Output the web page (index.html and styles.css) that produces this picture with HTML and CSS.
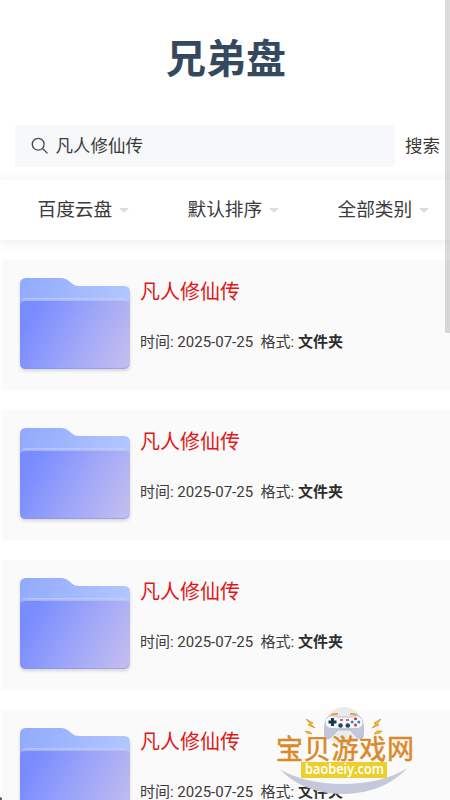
FILE: index.html
```html
<!DOCTYPE html>
<html lang="zh-CN">
<head>
<meta charset="utf-8">
<title>兄弟盘</title>
<link rel="stylesheet" href="styles.css">
</head>
<body>
<svg class="defs" width="0" height="0" aria-hidden="true">
  <defs>
    <linearGradient id="back" x1="0" y1="0" x2="1" y2="0.3"><stop offset="0" stop-color="#90a9fc"/><stop offset="1" stop-color="#b2c7ff"/></linearGradient>
    <linearGradient id="front" gradientUnits="userSpaceOnUse" x1="12" y1="34" x2="114" y2="88"><stop offset="0" stop-color="#788cff"/><stop offset=".5" stop-color="#a1a8f8"/><stop offset="1" stop-color="#c8c0ee"/></linearGradient>
    <linearGradient id="rim" x1="0" y1="0" x2="0" y2="1"><stop offset="0" stop-color="#c9d6ff" stop-opacity=".85"/><stop offset="1" stop-color="#b7c2ff" stop-opacity="0"/></linearGradient>
    <symbol id="folder" viewBox="0 0 110 96">
      <path d="M0 6Q0 0 6 0H41Q46 0 50 4L54 7Q56 8 59 8H104Q110 8 110 14V60H0Z" fill="url(#back)"/>
      <path d="M0 26Q0 20 6 20H104Q110 20 110 26V85Q110 91 104 91H6Q0 91 0 85Z" fill="url(#front)"/>
      <path d="M0 27Q0 20 6 20H104Q110 20 110 27Q109 23 104 23H6Q1 23 0 27Z" fill="url(#rim)"/>
      <path d="M1 87Q3 90.5 7 90.5H103Q107 90.5 109 87" fill="none" stroke="#8391dc" stroke-opacity=".55"/>
    </symbol>
  </defs>
</svg>
<main class="page">
  <h1 class="brand">兄弟盘</h1>
  <div class="search">
    <div class="search-box">
      <svg class="search-icon" viewBox="0 0 18 18"><circle cx="7.2" cy="7.2" r="5.9"/><path d="M11.5 11.5L16.6 16.4"/></svg>
      <span class="query">凡人修仙传</span>
    </div>
    <span class="search-button">搜索</span>
  </div>
  <nav class="filters">
    <div class="filter">百度云盘<i class="caret"></i></div>
    <div class="filter">默认排序<i class="caret"></i></div>
    <div class="filter">全部类别<i class="caret"></i></div>
  </nav>
  <section class="results">
    <article class="card"><svg class="folder"><use href="#folder"/></svg><div class="info"><h2>凡人修仙传</h2><p><span>时间: 2025-07-25</span><span>格式: <b>文件夹</b></span></p></div></article>
    <article class="card"><svg class="folder"><use href="#folder"/></svg><div class="info"><h2>凡人修仙传</h2><p><span>时间: 2025-07-25</span><span>格式: <b>文件夹</b></span></p></div></article>
    <article class="card"><svg class="folder"><use href="#folder"/></svg><div class="info"><h2>凡人修仙传</h2><p><span>时间: 2025-07-25</span><span>格式: <b>文件夹</b></span></p></div></article>
    <article class="card"><svg class="folder"><use href="#folder"/></svg><div class="info"><h2>凡人修仙传</h2><p><span>时间: 2025-07-25</span><span>格式: <b>文件夹</b></span></p></div></article>
  </section>
</main>
<svg class="watermark" viewBox="0 0 160 100">
  <circle cx="79" cy="26" r="19" fill="#e9ebef"/>
  <path d="M15 69C45 89 112 89 142 68C113 102 45 103 15 69Z" fill="#c5c7da"/>
  <path d="M66 15.500Q67 14 70 14H73M85 14H88Q91 14 92 15.500" fill="none" stroke="#e9a436" stroke-width="2"/>
  <path d="M67 15.500Q60 16 60 25Q59 32 60 37Q62 41 66 37L73 30H85L92 37Q96 41 98 37Q99 31 98 23Q97 16 91 15.500L85 17H73Z" fill="#c3c7dc" stroke="#aeb2c8" stroke-width=".8"/>
  <path d="M67 16Q60.500 17 60.500 22Q61 28 67 28H91Q97.500 28 97.500 22Q97 17 91 16L85 17.500H73Z" fill="#f7f8fc"/>
  <path d="M67.500 18V26M63.500 22H71.500" stroke="#173949" stroke-width="3"/>
  <g fill="#d92b35"><circle cx="90.500" cy="18.800" r="1.500"/><circle cx="90.500" cy="25" r="1.500"/></g>
  <g fill="#2b8bb7"><circle cx="87.200" cy="21.900" r="1.500"/><circle cx="93.800" cy="21.900" r="1.500"/></g>
  <g fill="#25475d"><circle cx="75.500" cy="25.500" r="2.300"/><circle cx="82.800" cy="25.500" r="2.300"/></g>
  <path d="M75 20H78M81 20H84" stroke="#d92b35" stroke-width="1.500"/>
  <g fill="#f3bd2d" stroke="#e49b29" stroke-width=".9"><path d="M41 19L48 23L46 24L50 28L43 25L45 24Z"/><path d="M116 19L109 23L111 24L107 28L114 25L112 24Z"/><path d="M40 31L45 32L47 34L42 33Z"/><path d="M117 31L112 31L109 34L115 33Z"/></g>
  <text class="mark-name" x="80" y="58.500" text-anchor="middle" textLength="138">宝贝游戏网</text>
  <rect x="36" y="62" width="86" height="16" fill="#ebcf2c"/>
  <text class="mark-url" x="79.500" y="74" text-anchor="middle" textLength="79" lengthAdjust="spacingAndGlyphs">baobeiy.com</text>
</svg>
<div class="scrollbar"></div>
<div class="corner"></div>
</body>
</html>
```
FILE: styles.css
```css
* { box-sizing: border-box; }
html { overflow: hidden; }
body {
  position: relative;
  height: 800px;
  margin: 0;
  overflow: hidden;
  background: #fff;
  color: #3b3b3b;
  font-family: Roboto, "Noto Sans CJK SC", sans-serif;
}
.defs { position: absolute; }
.page { display: flex; flex-direction: column; }
.brand {
  height: 125px;
  margin: 0;
  padding: 31px 0 0 2px;
  color: #34495e;
  font-size: 40px;
  font-weight: 700;
  line-height: 58px;
  text-align: center;
}
.search { display: flex; align-items: center; height: 55px; padding: 0 10px 13px 15px; font-size: 17.5px; }
.search-box {
  display: flex;
  flex: none;
  align-items: center;
  gap: 6.5px;
  width: 380px;
  height: 42px;
  padding-left: 16px;
  border-radius: 2px;
  background: #f6f8fa;
}
.query { padding-bottom: 4px; }
.search-icon { width: 18px; height: 18px; fill: none; stroke: #4a4a4a; stroke-width: 1.3; }
.search-button { flex: none; margin-left: 10px; padding-bottom: 4px; }
.filters {
  position: relative;
  display: grid;
  grid-template-columns: repeat(3, 1fr);
  height: 60px;
  background: #fff;
  box-shadow: 0 2px 12px rgba(100, 101, 102, .12);
}
.filter { display: flex; align-items: center; padding: 0 0 6px 37.5px; font-size: 18.7px; white-space: nowrap; }
.caret {
  margin: 7px 0 0 7px;
  border: 5px solid transparent;
  border-top-color: #dcdee0;
  border-bottom: 0;
}
.results { display: flex; flex-direction: column; gap: 20px; padding: 20px 0 0 2px; }
.card { display: flex; flex: none; gap: 10px; height: 130px; padding: 18px 0 0 18px; background: #fafafa; }
.folder { flex: none; width: 110px; height: 96px; filter: drop-shadow(0 2px 1.5px rgba(60, 60, 80, .18)); }
.info h2 { margin: -1px 0 0; color: #e01717; font-size: 20px; font-weight: 400; line-height: 30px; }
.info p { display: flex; gap: 7.5px; margin: 24px 0 0; font-size: 15px; line-height: 22px; white-space: nowrap; }
.info b { color: #2d2d2d; }
.watermark { position: absolute; left: 265px; top: 700px; width: 160px; height: 100px; }
.mark-name { fill: #dc8826; stroke: #dc8826; stroke-width: .5; font-family: "Noto Sans CJK SC", sans-serif; font-size: 27px; }
.mark-url { fill: #fff; font-family: "Open Sans", sans-serif; font-size: 14.5px; font-weight: 600; }
.scrollbar { position: absolute; top: 0; right: 0; width: 5px; height: 333px; background: rgba(0, 0, 0, .14); }
.corner { position: absolute; left: 0; bottom: 0; width: 2px; height: 3px; background: #48635b; border-top-right-radius: 2px; }
```
